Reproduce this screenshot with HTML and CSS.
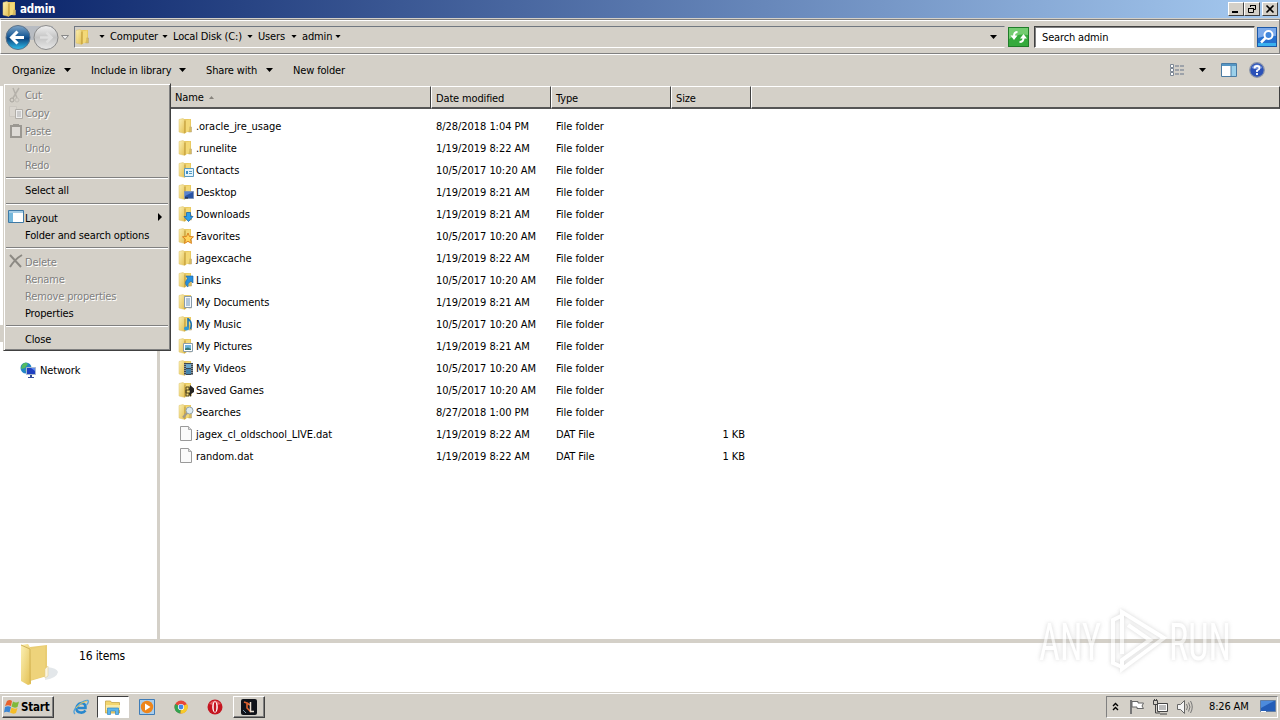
FILE: index.html
```html
<!DOCTYPE html>
<html lang="en">

<head>
    <meta charset="UTF-8">
    <title>admin</title>
    <link rel="stylesheet" href="styles.css">
</head>

<body>
    <!-- shared icons -->
    <svg class="sprites" width="0" height="0">
        <defs>
            <linearGradient id="gFolder" x1="0" y1="0" x2="1" y2="1">
                <stop offset="0" stop-color="#fbf0b4" />
                <stop offset="1" stop-color="#e3bf50" />
            </linearGradient>
            <linearGradient id="gBlue" x1="0" y1="0" x2="0" y2="1">
                <stop offset="0" stop-color="#7fa6c9" />
                <stop offset=".45" stop-color="#1c5c97" />
                <stop offset=".55" stop-color="#0d4680" />
                <stop offset="1" stop-color="#2fc0ee" />
            </linearGradient>
            <linearGradient id="gGrey" x1="0" y1="0" x2="0" y2="1">
                <stop offset="0" stop-color="#f0f0f0" />
                <stop offset=".5" stop-color="#c4c4c4" />
                <stop offset="1" stop-color="#e8e8e8" />
            </linearGradient>
            <symbol id="folder" viewBox="0 0 16 16">
                <path d="M6 1h7v13H6z" fill="#e9ca62" />
                <path d="M1 1.500 5 .5l2 1.500V15.500L1 14z" fill="url(#gFolder)" stroke="#dcc06a" stroke-width=".5" />
                <path d="M7 2.500 12 1.500V13l-5 2z" fill="#f3d978" />
                <path d="M7 2.500V15" stroke="#b8902c" />
                <path d="M11.500 9h2v5h-3" fill="#d9bd60" stroke="#bda878" stroke-width=".6" />
            </symbol>
            <symbol id="file" viewBox="0 0 16 16">
                <path d="M2.500.5h8l3 3v11h-11z" fill="#fafafa" stroke="#9a9a9a" />
                <path d="M10.500.5v3h3" fill="#ddd" stroke="#aaa" />
            </symbol>
            <symbol id="down" viewBox="0 0 7 4">
                <path d="M0 0h7L3.500 4z" />
            </symbol>
        </defs>
    </svg>

    <div class="titlebar">
        <svg class="title-icon" width="16" height="16"><use href="#folder" /></svg>
        <span class="title">admin</span>
        <div class="window-buttons">
            <span class="win-btn"><svg width="12" height="10"><path d="M2 7h6v2H2z" /></svg></span>
            <span class="win-btn"><svg width="12" height="10"><path d="M4.500 3V1.500h5v4H8M4 1.500h6M2.500 4.500h5v4h-5zM2 4.500h6" fill="none" stroke="#000" /></svg></span>
            <span class="win-btn close"><svg width="12" height="10"><path d="M2.500 1.500l7 7m0-7l-7 7" stroke="#000" stroke-width="1.600" /></svg></span>
        </div>
    </div>

    <div class="navbar">
        <svg class="nav-arrows" width="68" height="28">
            <rect x="9" y="3" width="40" height="14" fill="#b8bcc2" />
            <circle cx="14" cy="14.500" r="12" fill="url(#gBlue)" stroke="#5b7187" />
            <path d="M7 14.500h13M13.500 8.500l-6 6 6 6" fill="none" stroke="#fff" stroke-width="3" />
            <circle cx="42" cy="14.500" r="12" fill="url(#gGrey)" stroke="#8b8b8b" />
            <path d="M36 14.500h11M42.500 9.500l5 5-5 5" fill="none" stroke="#dedede" stroke-width="2.500" />
            <path d="M57.500 12.500h7l-3.500 4z" fill="#eee" stroke="#888" />
        </svg>
        <div class="address">
            <svg class="address-icon" width="16" height="18"><use href="#folder" /></svg>
            <svg class="arrow" width="6" height="3"><use href="#down" /></svg>
            <span class="crumb computer">Computer</span>
            <svg class="arrow" width="6" height="3"><use href="#down" /></svg>
            <span class="crumb disk">Local Disk (C:)</span>
            <svg class="arrow" width="6" height="3"><use href="#down" /></svg>
            <span class="crumb users">Users</span>
            <svg class="arrow" width="6" height="3"><use href="#down" /></svg>
            <span class="crumb last">admin</span>
            <svg class="arrow" width="6" height="3"><use href="#down" /></svg>
            <svg class="history" width="7" height="4"><use href="#down" /></svg>
        </div>
        <svg class="refresh" width="21" height="20">
            <rect x=".5" y=".5" width="20" height="19" fill="#35aa3c" stroke="#207c29" />
            <path d="M1 1h19v7Q10 6 1 12z" fill="#73cc70" />
            <path d="M9.500 5Q6 5 6 9M11.500 15q4 0 4-4" fill="none" stroke="#fff" stroke-width="2" />
            <path d="M2.500 8.500h7L6 13zM12 11.500h7L15.500 7z" fill="#fff" />
        </svg>
        <div class="search">Search admin</div>
        <svg class="search-btn" width="20" height="20">
            <rect x=".5" y=".5" width="19" height="19" fill="#2570cf" stroke="#1d57a5" />
            <path d="M1 1h18v8Q9 8 1 11z" fill="#7aa9ea" />
            <path d="M1 16h18v3H1z" fill="#39b0ee" />
            <circle cx="11.500" cy="8" r="4" fill="#4187dc" stroke="#fff" stroke-width="2" />
            <path d="M8.500 11 4 15.500" stroke="#fff" stroke-width="2.500" />
        </svg>
    </div>

    <div class="toolbar">
        <span class="tool organize">Organize</span>
        <svg class="tool-arrow" width="7" height="4"><use href="#down" /></svg>
        <span class="tool include">Include in library</span>
        <svg class="tool-arrow" width="7" height="4"><use href="#down" /></svg>
        <span class="tool share">Share with</span>
        <svg class="tool-arrow" width="7" height="4"><use href="#down" /></svg>
        <span class="tool">New folder</span>
        <div class="view-tools">
            <svg width="16" height="12">
                <path d="M.5.500h3v3h-3zM.5 4.500h3v3h-3zM.5 8.500h3v3h-3z" fill="#fff" stroke="#7c8794" />
                <path d="M5 2h10M5 6h10M5 10h10" stroke="#66758a" stroke-dasharray="4 1" />
            </svg>
            <svg class="view-arrow" width="7" height="4"><use href="#down" /></svg>
            <svg class="preview" width="16" height="14">
                <path d="M.5.500h15v13H.5z" fill="#fff" stroke="#4a7ba3" />
                <path d="M1 1h14v2H1z" fill="#5596c4" />
                <path d="M10 3h5v10h-5z" fill="#9bd0ea" />
                <path d="M10 3v10" stroke="#4a7ba3" />
            </svg>
            <svg width="16" height="16">
                <circle cx="8" cy="8" r="7.300" fill="#2b51b8" stroke="#8b95aa" stroke-width="1.200" />
                <path d="M2.500 6a6 6 0 0 1 11 0q-5 2-11 0" fill="#7390d8" />
                <path d="M5.500 6.500Q5.500 4 8 4t2.500 2.200Q10.500 7.500 8 8.500V10M8 11v2" fill="none" stroke="#fff" stroke-width="1.800" />
            </svg>
        </div>
    </div>

    <div class="content">
        <div class="sidebar">
            <div class="hidden-node"></div>
            <div class="network">
                <svg width="16" height="16">
                    <circle cx="6" cy="6" r="5.500" fill="#2384c6" />
                    <path d="M2 3Q5-1 8 2L5 6 1 7zM5 8l4-1-2 4z" fill="#53bb61" />
                    <path d="M6.500 5.500h9v7h-9z" fill="#1f3fc0" stroke="#a9b8d0" />
                    <path d="M11 6h4v3z" fill="#5f8cf0" />
                    <path d="M10 13h2v2h2v1H8v-1h2z" fill="#334d96" />
                </svg>
                <span>Network</span>
            </div>
        </div>
        <div class="files">
            <div class="file-row header">
                <div class="col name">Name <svg width="5" height="3"><path d="M2.500 0 5 3H0z" fill="#87837c" /></svg></div>
                <div class="col">Date modified</div>
                <div class="col">Type</div>
                <div class="col">Size</div>
                <div class="col"></div>
            </div>
            <div class="rows">
                <div class="file-row"><span class="fname"><svg width="16" height="16"><use href="#folder" /></svg>.oracle_jre_usage</span><span>8/28/2018 1:04 PM</span><span>File folder</span></div>
                <div class="file-row"><span class="fname"><svg width="16" height="16"><use href="#folder" /></svg>.runelite</span><span>1/19/2019 8:22 AM</span><span>File folder</span></div>
                <div class="file-row"><span class="fname"><svg width="16" height="16"><use href="#folder" /><path d="M6.500 6.500h9v8h-9z" fill="#e4f4fc" stroke="#5a9ac0" /><path d="M8 9h2v3H8z" fill="#3d8dc6" /><path d="M11 9.500h3M11 11.500h3" stroke="#5a9ac0" /></svg>Contacts</span><span>10/5/2017 10:20 AM</span><span>File folder</span></div>
                <div class="file-row"><span class="fname"><svg width="16" height="16"><use href="#folder" /><path d="M6.500 7.500h9v7h-9z" fill="#2853a4" stroke="#7e94b9" /><path d="M7 8h8l-8 4z" fill="#5a83cd" /><path d="M7 14h3" stroke="#222" /></svg>Desktop</span><span>1/19/2019 8:21 AM</span><span>File folder</span></div>
                <div class="file-row"><span class="fname"><svg width="16" height="16"><use href="#folder" /><path d="M8.500 6.500h4v4h2.500L10.500 15.500 6 10.500h2.500z" fill="#2fa0ea" stroke="#1566ae" stroke-width=".8" /></svg>Downloads</span><span>1/19/2019 8:21 AM</span><span>File folder</span></div>
                <div class="file-row"><span class="fname"><svg width="16" height="16"><use href="#folder" /><path d="M10 5l1.500 3.500 4 .3-3 2.600 1 4L10 13.300l-3.500 2.100 1-4-3-2.600 4-.3z" fill="#ffd35a" stroke="#dc8420" /></svg>Favorites</span><span>10/5/2017 10:20 AM</span><span>File folder</span></div>
                <div class="file-row"><span class="fname"><svg width="16" height="16"><use href="#folder" /></svg>jagexcache</span><span>1/19/2019 8:22 AM</span><span>File folder</span></div>
                <div class="file-row"><span class="fname"><svg width="16" height="16"><use href="#folder" /><path d="M8 4h7v7l-2-2q-4 2-3 6-5-3-.5-8.500z" fill="#278fdd" stroke="#1260a6" stroke-width=".6" /></svg>Links</span><span>10/5/2017 10:20 AM</span><span>File folder</span></div>
                <div class="file-row"><span class="fname"><svg width="16" height="16"><use href="#folder" /><path d="M6.500 2.500h7v11h-7z" fill="#f5f8fb" stroke="#8a9ba9" /><path d="M8 5h4M8 7h4M8 9h4M8 11h4" stroke="#6b93bb" /></svg>My Documents</span><span>1/19/2019 8:21 AM</span><span>File folder</span></div>
                <div class="file-row"><span class="fname"><svg width="16" height="16"><use href="#folder" /><path d="M10 2v10M10.500 3q4.500 4 2 10" fill="none" stroke="#1b73b5" stroke-width="1.600" /><ellipse cx="8.500" cy="12.500" rx="2.500" ry="2" fill="#2f9ad8" /></svg>My Music</span><span>10/5/2017 10:20 AM</span><span>File folder</span></div>
                <div class="file-row"><span class="fname"><svg width="16" height="16"><use href="#folder" /><path d="M5.500 5.500h9v8h-9z" fill="#fff" stroke="#8c9eaa" /><path d="M7 7h6v5H7z" fill="#6cb4dc" /><path d="M7 12V10.500l3-1 3 1.500v1z" fill="#347b77" /></svg>My Pictures</span><span>1/19/2019 8:21 AM</span><span>File folder</span></div>
                <div class="file-row"><span class="fname"><svg width="16" height="16"><use href="#folder" /><path d="M6 3h9v12H6z" fill="#3c4650" /><path d="M8 4h5v4H8z" fill="#6ba6c9" /><path d="M8 9h5v5H8z" fill="#4584ad" /><path d="M7 4v11M14 4v11" stroke="#d5dce0" stroke-dasharray="1 1" /></svg>My Videos</span><span>10/5/2017 10:20 AM</span><span>File folder</span></div>
                <div class="file-row"><span class="fname"><svg width="16" height="16"><use href="#folder" /><path d="M8 5h3v3H8v3h3v3H8z" fill="none" stroke="#51441d" /><path d="M12 3l4 3.500v3.500l-3 2v3l-2-3 1-3-1-1z" fill="#252422" /></svg>Saved Games</span><span>10/5/2017 10:20 AM</span><span>File folder</span></div>
                <div class="file-row"><span class="fname"><svg width="16" height="16"><use href="#folder" /><circle cx="11.500" cy="6.500" r="3.500" fill="#dceaf1" stroke="#94a3ac" /><path d="M9 9l-4 4.500" stroke="#a19a8a" stroke-width="2" /></svg>Searches</span><span>8/27/2018 1:00 PM</span><span>File folder</span></div>
                <div class="file-row"><span class="fname"><svg width="16" height="16"><use href="#file" /></svg>jagex_cl_oldschool_LIVE.dat</span><span>1/19/2019 8:22 AM</span><span>DAT File</span><span class="size">1 KB</span></div>
                <div class="file-row"><span class="fname"><svg width="16" height="16"><use href="#file" /></svg>random.dat</span><span>1/19/2019 8:22 AM</span><span>DAT File</span><span class="size">1 KB</span></div>
            </div>
        </div>
    </div>

    <div class="details">
        <svg width="40" height="44" viewBox="0 0 40 44">
            <path d="M27 24q10 1 11 5-1 6-13 8z" fill="#e3e7ea" />
            <path d="M10 4l17-2v31l-17 5z" fill="#e9cd74" />
            <path d="M1 2 8 1l3 5v35l-3 1-7-4z" fill="url(#gFolder)" />
            <path d="M11 6l14-3v30l-14 4z" fill="#eed37b" />
            <path d="M1 2l9 4v34" fill="none" stroke="#d2b257" />
            <path d="M25 26l3-3v10l-3 2z" fill="#fbf5e0" stroke="#dcc98c" stroke-width=".5" />
        </svg>
        <span>16 items</span>
    </div>

    <div class="taskbar">
        <div class="start">
            <svg width="16" height="16">
                <path d="M3 2q3-2 5 0L7 7Q4 5.500 1 7z" fill="#e8622c" />
                <path d="M9 2.500q3 2 6 0L13.500 8q-3 1.500-6-.5z" fill="#80b93b" />
                <path d="M1 8q3-1.500 6 0l-1.500 5.500q-3-1.500-5.500 0z" fill="#3b86d4" />
                <path d="M7.500 8.500q3 2 6 .5L12 14q-3 1.500-6-.5z" fill="#f5bd28" />
            </svg>
            <b>Start</b>
        </div>
        <div class="task ie">
            <svg width="16" height="16">
                <path d="M12.500 11.500Q10.500 14 7.500 13.500 3 13 3.500 9t5-5q4.500.5 4 5H5" fill="none" stroke="#2787cd" stroke-width="2.600" />
                <path d="M2 15Q-1 12 5 6.500T15 1.500q1 2-1.500 4.500" fill="none" stroke="#4da0da" stroke-width="1.300" />
                <path d="M3 9Q8 3 14 2" fill="none" stroke="#e6c554" />
            </svg>
        </div>
        <div class="task active">
            <svg width="18" height="16">
                <path d="M1.500 2h5l1 1.500h8V14h-14z" fill="#f3d66e" stroke="#c7a447" stroke-width=".8" />
                <path d="M2 6h14v5H2z" fill="#fbeba6" />
                <path d="M3.500 15.500V9h11v6.500h-3V12h-5v3.500z" fill="#5cb5ec" stroke="#3287c3" stroke-width=".7" />
            </svg>
        </div>
        <div class="task media">
            <svg width="16" height="16">
                <path d="M.5.500h15v15H.5z" fill="#a9cdec" stroke="#3f7cb7" />
                <circle cx="8" cy="8" r="6.200" fill="#ee851b" />
                <path d="M6 4.500v7l5.500-3.500z" fill="#fff" />
            </svg>
        </div>
        <div class="task chrome">
            <svg width="14" height="14">
                <circle cx="7" cy="7" r="6.500" fill="#e7463a" />
                <path d="M7 7 1.200 4A6.500 6.500 0 0 0 6.500 13.500z" fill="#31a350" />
                <path d="M7 7l6-3a6.500 6.500 0 0 1-6.500 9.500z" fill="#f7cb2b" />
                <circle cx="7" cy="7" r="3.100" fill="#fff" />
                <circle cx="7" cy="7" r="2.400" fill="#4286e8" />
            </svg>
        </div>
        <div class="task opera">
            <svg width="16" height="16">
                <circle cx="8" cy="8" r="7.500" fill="#c51520" />
                <path d="M2 5q6-7 12 0-6 2-12 0" fill="#e45b5f" />
                <ellipse cx="8" cy="8" rx="2.800" ry="5.800" fill="#fff" />
                <ellipse cx="8" cy="8" rx="1.300" ry="5" fill="#c51520" />
            </svg>
        </div>
        <div class="task raised">
            <svg width="16" height="16">
                <rect width="16" height="16" rx="2" fill="#10131a" />
                <path d="M3 3l3 1v5l4 4M6 4l3 2" fill="none" stroke="#e1622f" stroke-width="1.600" />
                <path d="M9.500 3v9.500H13" fill="none" stroke="#e9dfd2" stroke-width="1.500" />
                <path d="M2 11l3 3" stroke="#7994aa" />
            </svg>
        </div>
        <div class="tray">
            <svg class="chevrons" width="7" height="9"><path d="M1 4l2.500-2.500L6 4M1 8l2.500-2.500L6 8" fill="none" stroke="#000" stroke-width="1.400" /></svg>
            <svg class="flag" width="16" height="16"><path d="M2 1v14" stroke="#777" stroke-width="2" /><path d="M3 2.500h6v1.500h5.500L13 7l1.500 2.500H8V8H3z" fill="#fff" stroke="#666" /></svg>
            <svg class="lan" width="17" height="16"><path d="M5.500 4.500h10v8h-10z" fill="#bbb" stroke="#444" /><path d="M6.500 5.500h8v6h-8z" fill="none" stroke="#fff" /><path d="M8 15h7M1.500 1.500h4v4h-4zM3.500 6v8H8" fill="none" stroke="#444" /><path d="M2.500 0v2M4.500 0v2" stroke="#444" /></svg>
            <svg class="sound" width="17" height="16"><path d="M1.500 5.500h3l4-4v13l-4-4h-3z" fill="#f5f5f5" stroke="#666" /><path d="M10.500 5q2 3 0 6M12.500 3.500q3 4.500 0 9M14.500 2q3.500 6 0 12" fill="none" stroke="#777" /></svg>
            <span class="clock">8:26 AM</span>
            <svg class="show-desktop" width="16" height="13"><path d="M.5.500h15v11H.5z" fill="#245db8" stroke="#637ea3" /><path d="M1 1h13L1 8z" fill="#4d8bdc" /><path d="M1 11.500h5" stroke="#fff" /></svg>
        </div>
    </div>

    <!-- Organize menu -->
    <div class="menu">
        <div class="item tall off"><svg width="16" height="16"><path d="M5 1l4 10M11 1 5 11" stroke="#b5b1aa" stroke-width="1.500" /><circle cx="4" cy="13" r="2" fill="none" stroke="#a6a39c" /><circle cx="9" cy="13" r="2" fill="none" stroke="#c0bcb5" /></svg>Cut</div>
        <div class="item tall off"><svg width="16" height="16"><path d="M1.500 1.500h7v10h-7z" fill="#d9d5ce" stroke="#cbc7c0" /><path d="M7.500 4.500h7v9h-7z" fill="#eee" stroke="#b0ada7" /><path d="M9 7h4M9 9h4M9 11h4" stroke="#aaa" /></svg>Copy</div>
        <div class="item tall off"><svg width="16" height="16"><path d="M3 3h10v11H3z" fill="#dedbd6" stroke="#9b9892" stroke-width="2" /><path d="M5 1h6v3H5z" fill="#9b9892" /></svg>Paste</div>
        <div class="item off">Undo</div>
        <div class="item off">Redo</div>
        <div class="sep"></div>
        <div class="item low">Select all</div>
        <div class="sep wide"></div>
        <div class="item big"><svg width="16" height="16"><path d="M.5 1.500h15v12H.5z" fill="#fff" stroke="#3f79a5" /><path d="M1 2h14v2H1z" fill="#a4cbe4" /><path d="M1 4h4v9H1z" fill="#75b8dc" /></svg>Layout<svg class="submenu" width="4" height="8"><path d="M0 0l4 4-4 4z" /></svg></div>
        <div class="item">Folder and search options</div>
        <div class="sep"></div>
        <div class="item big off"><svg width="16" height="16"><path d="M2 2l11 12M14 2Q7 6 2 14" fill="none" stroke="#8c8983" stroke-width="2" /></svg>Delete</div>
        <div class="item off">Rename</div>
        <div class="item off">Remove properties</div>
        <div class="item">Properties</div>
        <div class="sep"></div>
        <div class="item tall">Close</div>
    </div>

    <!-- watermark -->
    <svg class="watermark" width="220" height="80">
        <text x="7" y="58" textLength="62" lengthAdjust="spacingAndGlyphs">ANY</text>
        <path d="M90 52V10l42 26-42 31v-9l28-20-22-15M90 65l-9-4V18l8-4" />
        <text x="137" y="58" textLength="62" lengthAdjust="spacingAndGlyphs">RUN</text>
    </svg>
</body>

</html>
```
FILE: styles.css
```css
body {
    margin: 0;
    width: 1280px;
    height: 720px;
    overflow: hidden;
    position: relative;
    display: flex;
    flex-direction: column;
    background: #d4d0c8;
    color: #000;
    font-family: "DejaVu Sans Condensed", "DejaVu Sans", Tahoma, sans-serif;
    font-stretch: condensed;
    font-size: 11px;
    letter-spacing: -0.15px;
    white-space: nowrap;
}

svg {
    display: block;
    flex: none;
}

.sprites {
    position: absolute;
}

/* title bar */
.titlebar {
    height: 18px;
    display: flex;
    align-items: center;
    background: linear-gradient(to right, #0a246a, #a6caf0);
    color: #fff;
    flex: none;
}

.title-icon {
    margin: 0 2px 0 2px;
}

.title {
    font-weight: bold;
    font-size: 11.5px;
}

.window-buttons {
    display: flex;
    margin-left: auto;
    padding-right: 2px;
}

.win-btn {
    box-sizing: border-box;
    width: 16px;
    height: 14px;
    padding: 1px;
    background: #d4d0c8;
    border: 1px solid;
    border-color: #fff #404040 #404040 #fff;
}

.win-btn.close {
    margin-left: 2px;
}

/* address bar */
.navbar {
    box-sizing: border-box;
    height: 35px;
    margin-top: 1px;
    display: flex;
    align-items: center;
    border: 1px solid #808080;
    border-left-color: #fff;
    box-shadow: inset 0 1px #fff, 0 1px #fff;
    padding-left: 3px;
    flex: none;
}

.address {
    box-sizing: border-box;
    width: 931px;
    height: 22px;
    margin-left: 2px;
    display: flex;
    align-items: center;
    border: 1px solid;
    border-color: #707780 #d4d0c8 #fff #707780;
}

.address-icon {
    margin-right: 8px;
}

.crumb {
    margin-left: 5px;
}

.computer {
    width: 50px;
    margin-right: 2px;
}

.disk {
    width: 70px;
    margin-right: 4px;
}

.users {
    width: 31px;
    margin-right: 2px;
}

.last {
    width: 29px;
    margin-right: 4px;
}

.history {
    margin-left: auto;
    margin-right: 7px;
}

.refresh {
    margin-left: 3px;
}

.search {
    box-sizing: border-box;
    width: 221px;
    height: 22px;
    margin: 0 2px 0 5px;
    padding-left: 7px;
    line-height: 21px;
    background: #fff;
    border: 1px solid;
    border-color: #404040 #d4d0c8 #fff #404040;
    box-shadow: inset 1px 1px #808080;
}

/* command bar */
.toolbar {
    height: 32px;
    display: flex;
    align-items: center;
    padding-left: 12px;
    flex: none;
}

.tool-arrow {
    margin-right: 20px;
}

.organize {
    width: 52px;
}

.include {
    width: 88px;
}

.share {
    width: 60px;
}

.view-tools {
    display: flex;
    align-items: center;
    margin-left: auto;
    padding-right: 15px;
}

.view-arrow {
    margin: 0 15px 0 13px;
}

.preview {
    margin-right: 12px;
}

/* folder pane */
.content {
    height: 553px;
    display: flex;
    flex: none;
}

.sidebar {
    width: 157px;
    background: #fff;
    border-right: 3px solid #d4d0c8;
}

.hidden-node {
    width: 3px;
    height: 17px;
    margin-top: 239px;
    background: #d4d0c8;
}

.network {
    display: flex;
    align-items: center;
    gap: 4px;
    margin-top: 20px;
    padding-left: 20px;
}

.network span {
    padding-top: 1px;
}

.files {
    flex: 1;
    background: #fff;
}

.file-row {
    display: grid;
    grid-template-columns: 272px 120px 120px 80px 1fr;
    align-items: center;
    height: 22px;
    letter-spacing: -0.05px;
}

.file-row > span {
    padding-left: 4px;
}

.header {
    height: 23px;
    grid-template-columns: 272px 120px 120px 80px 1fr;
    background: #d4d0c8;
    margin-left: -1px;
    letter-spacing: -0.15px;
}

.col {
    box-sizing: border-box;
    height: 23px;
    line-height: 23px;
    padding-left: 4px;
    border-top: 1px solid #fff;
    border-left: 1px solid #fff;
    border-right: 1px solid #404040;
    border-bottom: 2px solid #555;
}

.name {
    display: flex;
    align-items: center;
    gap: 5px;
    padding-left: 15px;
}

.rows {
    padding-top: 6px;
}

.file-row .fname {
    display: flex;
    align-items: center;
    gap: 2px;
    padding-left: 18px;
}

.file-row .size {
    text-align: right;
    padding-right: 7px;
}

/* details pane */
.details {
    height: 49px;
    display: flex;
    gap: 19px;
    padding-left: 20px;
    border-top: 4px solid #d4d0c8;
    background: #fff;
    flex: none;
}

.details span {
    padding-top: 6px;
    font-size: 12px;
}

/* taskbar */
.taskbar {
    height: 27px;
    display: flex;
    align-items: center;
    padding-left: 2px;
    border-top: 1px solid #d4d0c8;
    box-shadow: inset 0 1px #fff;
    flex: none;
}

.start {
    box-sizing: border-box;
    width: 52px;
    height: 22px;
    margin-right: 13px;
    display: flex;
    align-items: center;
    gap: 1px;
    border: 1px solid;
    border-color: #fff #404040 #404040 #fff;
    box-shadow: inset -1px -1px #808080;
    padding-left: 1px;
}

.start b {
    font-size: 11.5px;
    letter-spacing: -0.2px;
}

.task {
    box-sizing: border-box;
    width: 32px;
    height: 22px;
    margin-right: 2px;
    display: flex;
    align-items: center;
    justify-content: center;
}

.ie {
    width: 28px;
}

.active {
    background: #fff;
    border: 1px solid;
    border-color: #404040 #fff #fff #404040;
}

.raised {
    border: 1px solid;
    border-color: #fff #404040 #404040 #fff;
    box-shadow: inset -1px -1px #808080;
}

.tray {
    box-sizing: border-box;
    width: 172px;
    height: 22px;
    margin-left: auto;
    margin-right: 2px;
    padding-left: 5px;
    display: flex;
    align-items: center;
    border: 1px solid;
    border-color: #808080 #fff #fff #808080;
}

.chevrons {
    margin-right: 10px;
}

.flag {
    margin-right: 7px;
}

.lan {
    margin-right: 7px;
}

.clock {
    width: 41px;
    margin: 0 10px 0 16px;
}

/* popup menu */
.menu {
    position: absolute;
    left: 3px;
    top: 83px;
    width: 164px;
    height: 263px;
    padding: 1px;
    background: #d4d0c8;
    border: 1px solid;
    border-color: #d4d0c8 #404040 #404040 #d4d0c8;
    box-shadow: inset 1px 1px #fff, inset -1px -1px #808080;
    padding-top: 2px;
}

.item {
    position: relative;
    height: 17px;
    line-height: 17px;
    padding-left: 20px;
}

.item.low {
    line-height: 18px;
}

.item.tall {
    height: 18px;
    line-height: 20px;
}

.item.big {
    height: 19px;
    line-height: 21px;
}

.item.off {
    color: #808080;
    text-shadow: 1px 1px #fff;
}

.item svg {
    position: absolute;
    left: 3px;
    top: 1px;
}

.item .submenu {
    left: auto;
    right: 7px;
    top: 5px;
}

.sep {
    height: 1px;
    margin: 3px 1px;
    border-bottom: 1px solid #fff;
    background: #808080;
}

.sep.wide {
    margin-top: 4px;
}

.watermark {
    position: absolute;
    left: 1032px;
    top: 602px;
    fill: none;
    stroke: #fff;
    stroke-width: 4px;
    opacity: 0.6;
    filter: drop-shadow(0 0 2px #bbb);
}

.watermark text {
    font-family: Roboto, sans-serif;
    font-size: 51px;
    letter-spacing: 0;
    fill: #fff;
    stroke: none;
}
```
